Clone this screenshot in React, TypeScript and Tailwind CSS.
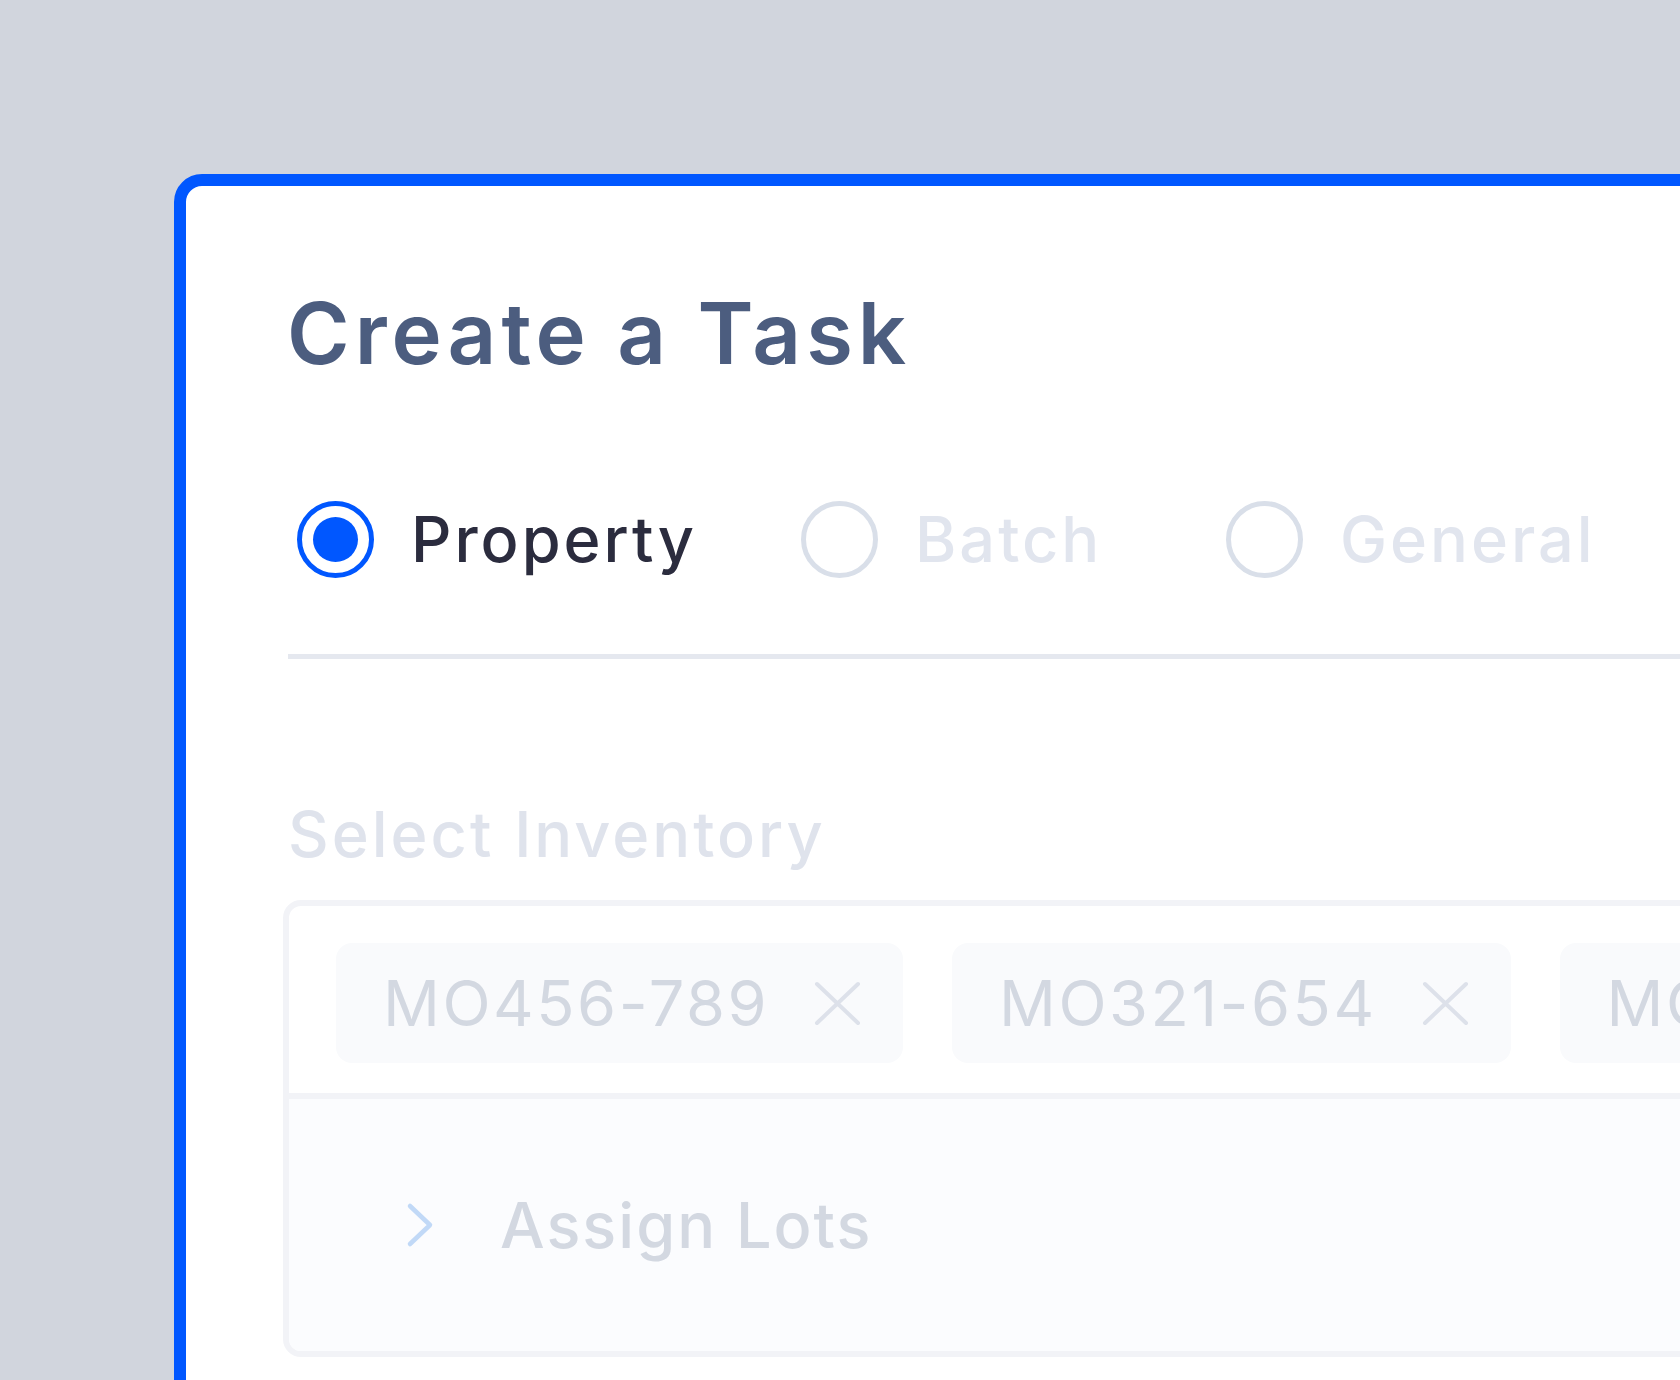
import React from 'react';

const chips = ['MO456-789', 'MO321-654', 'MO987-123'];

function Radio({ label, active, width }: { label: string; active?: boolean; width: string }) {
  return (
    <div className={`flex flex-none items-center gap-[37px] ${width}`}>
      <div
        className={`flex h-[77px] w-[77px] flex-none items-center justify-center rounded-full border-[5px] ${
          active ? 'border-[#0057ff]' : 'border-[#d9dfe9]'
        }`}
      >
        {active && <div className="h-[45px] w-[45px] rounded-full bg-[#0057ff]" />}
      </div>
      <span
        className={`text-[63px] leading-none font-medium tracking-[3px] ${
          active ? 'text-[#2b2c3e] tracking-[2px]' : 'text-[#e1e5ee]'
        }`}
      >
        {label}
      </span>
    </div>
  );
}

function CloseIcon() {
  return (
    <svg width="47" height="45" viewBox="0 0 47 45" className="flex-none">
      <path d="M3 3 L44 42 M44 3 L3 42" stroke="#dde1ea" strokeWidth="4" strokeLinecap="round" fill="none" />
    </svg>
  );
}

export default function App() {
  return (
    <div
      className="h-[1380px] w-[1680px] overflow-hidden bg-[#d1d5dd] pt-[174px] pl-[174px]"
      style={{ fontFamily: 'Inter, "Noto Sans", sans-serif' }}
    >
      <div className="h-[1400px] w-[1700px] rounded-[28px] border-[12px] border-[#0057ff] bg-white pt-[105px] pl-[97px]">
        {/* Title */}
        <h1 className="ml-[4px] text-[85px] leading-none font-semibold tracking-[5px] text-[#4c5d7f]">Create a Task</h1>

        {/* Task type */}
        <div className="mt-[125px] flex pl-[14px]">
          <Radio label="Property" active width="w-[504px]" />
          <Radio label="Batch" width="w-[425px]" />
          <Radio label="General" width="w-[480px]" />
        </div>

        <div className="mt-[76px] ml-[5px] h-[5px] bg-[#e5e8ef]" />

        {/* Inventory */}
        <div className="mt-[144px] ml-[5px] text-[63px] leading-none font-medium tracking-[3px] text-[#dfe3ec]">
          Select Inventory
        </div>

        <div className="mt-[34px] overflow-hidden rounded-[18px] border-[6px] border-[#f2f3f7]">
          <div className="flex gap-[49px] border-b-[6px] border-[#f2f3f7] pt-[37px] pb-[30px] pl-[47px]">
            {chips.map((c) => (
              <div
                key={c}
                className="flex h-[120px] flex-none items-center gap-[45px] rounded-[16px] bg-[#f9fafc] pr-[42px] pl-[47px]"
              >
                <span className="text-[63px] leading-none tracking-[2.5px] text-[#d3d8e1]">{c}</span>
                <CloseIcon />
              </div>
            ))}
          </div>
          <div className="flex h-[252px] items-center bg-[#fbfcfe] pl-[117px]">
            <svg width="28" height="46" viewBox="0 0 28 46" className="flex-none">
              <path d="M4 4 L24 23 L4 42" stroke="#c1d9f7" strokeWidth="4.5" strokeLinecap="round" strokeLinejoin="round" fill="none" />
            </svg>
            <span className="ml-[66px] text-[63px] leading-none font-medium tracking-[2px] text-[#d3d8e1]">Assign Lots</span>
          </div>
        </div>
      </div>
    </div>
  );
}
